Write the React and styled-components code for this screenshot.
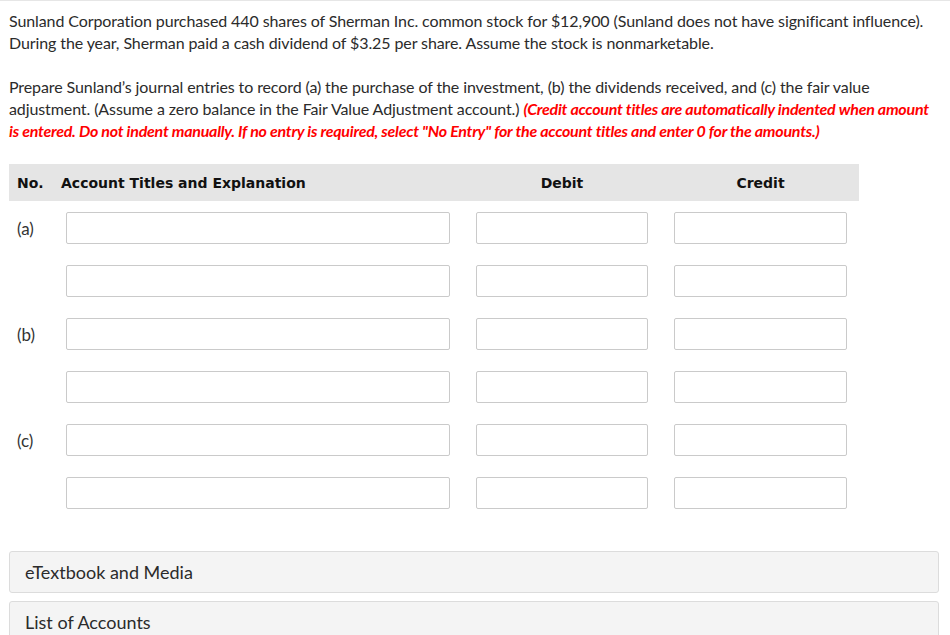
import styled, { createGlobalStyle } from 'styled-components'

const GlobalStyle = createGlobalStyle`
  body {
    margin: 0;
    background: #fff;
    font-family: Lato, "Open Sans", sans-serif;
  }
`

const Page = styled.div`
  border-top: 1px solid #e6e6e6;
  padding: 9px 9px 0 9px;
  color: #2b2b2b;
`

const Para = styled.p`
  margin: 0 0 22px 0;
  font-size: 16px;
  line-height: 22px;
  letter-spacing: -0.1px;
  white-space: nowrap;
`

const Note = styled.span`
  color: #f00;
  font-weight: 700;
  font-style: italic;
  letter-spacing: -0.25px;
`

const Table = styled.div`
  width: 850px;
`

const HeadRow = styled.div`
  display: grid;
  grid-template-columns: 31px 384px 172px 173px;
  column-gap: 26px;
  height: 37px;
  align-items: center;
  background: #e5e5e5;
  font-family: "DejaVu Sans", Verdana, sans-serif;
  font-weight: 700;
  font-size: 14px;
  color: #111;
  margin-bottom: 11px;
`

const HeadCell = styled.div`
  text-align: ${p => (p.$center ? 'center' : 'left')};
  padding-left: ${p => p.$pad || 0}px;
  margin-left: ${p => p.$shift || 0}px;
  white-space: nowrap;
`

const Row = styled.div`
  display: grid;
  grid-template-columns: 31px 384px 172px 173px;
  column-gap: 26px;
  align-items: center;
  margin-bottom: 21px;
`

const Label = styled.div`
  font-size: 17px;
  padding-left: 8px;
  color: #333;
`

const Field = styled.input`
  box-sizing: border-box;
  height: 32px;
  width: 100%;
  border: 1px solid #cacaca;
  border-radius: 2px;
  background: #fff;
  outline: none;
  font-family: inherit;
  font-size: 15px;
`

const Spacer = styled.div`
  height: 21px;
`

const Panel = styled.div`
  box-sizing: border-box;
  width: 930px;
  height: 42px;
  display: flex;
  align-items: center;
  padding-left: 15px;
  background: #f4f4f4;
  border: 1px solid #dcdcdc;
  border-radius: 3px;
  font-size: 18px;
  color: #2b2b2b;
  margin-bottom: 8px;
`

const rows = ['(a)', '', '(b)', '', '(c)', '']

export default function App() {
  return (
    <>
      <GlobalStyle />
      <Page>
        <Para>
          Sunland Corporation purchased 440 shares of Sherman Inc. common stock for $12,900 (Sunland does not have significant influence).
          <br />
          During the year, Sherman paid a cash dividend of $3.25 per share. Assume the stock is nonmarketable.
        </Para>
        <Para>
          Prepare Sunland’s journal entries to record (a) the purchase of the investment, (b) the dividends received, and (c) the fair value
          <br />
          adjustment. (Assume a zero balance in the Fair Value Adjustment account.){' '}
          <Note>
            (Credit account titles are automatically indented when amount
            <br />
            is entered. Do not indent manually. If no entry is required, select "No Entry" for the account titles and enter 0 for the amounts.)
          </Note>
        </Para>
        <Table>
          <HeadRow>
            <HeadCell $pad={8}>No.</HeadCell>
            <HeadCell $shift={-5}>Account Titles and Explanation</HeadCell>
            <HeadCell $center>Debit</HeadCell>
            <HeadCell $center>Credit</HeadCell>
          </HeadRow>
          {rows.map((label, i) => (
            <Row key={i}>
              <Label>{label}</Label>
              <Field type="text" />
              <Field type="text" />
              <Field type="text" />
            </Row>
          ))}
        </Table>
        <Spacer />
        <Panel>eTextbook and Media</Panel>
        <Panel>List of Accounts</Panel>
      </Page>
    </>
  )
}
